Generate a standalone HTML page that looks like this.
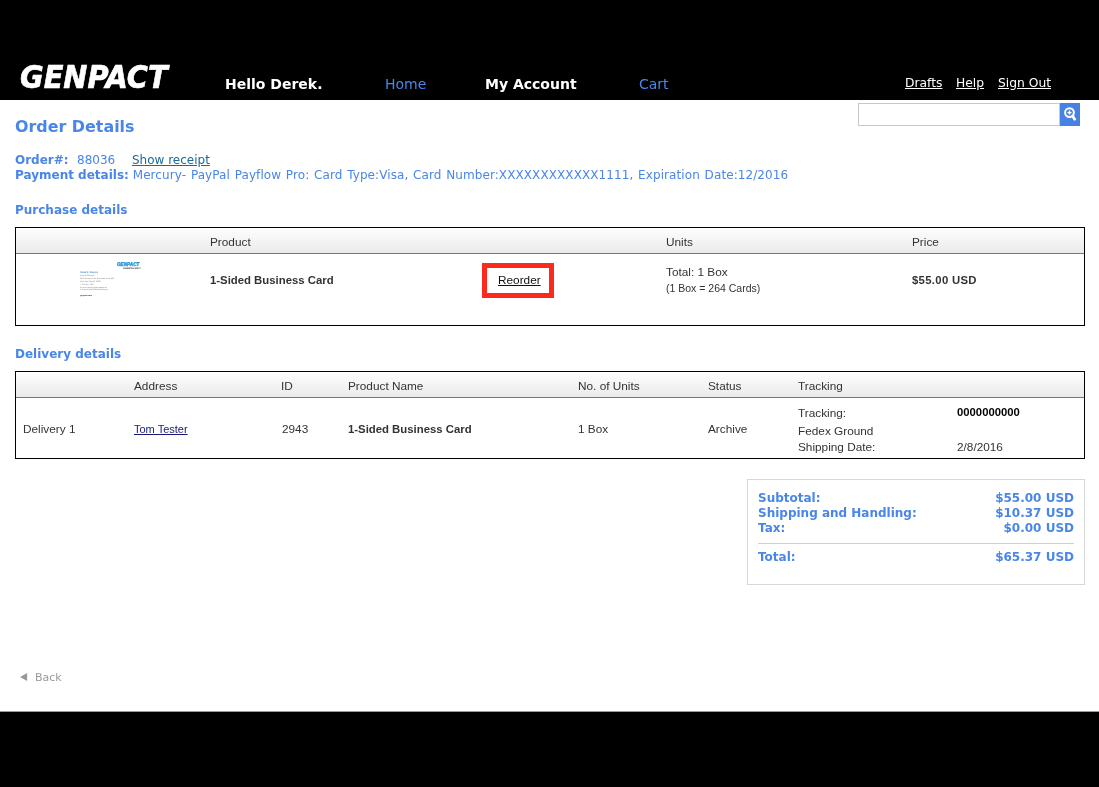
<!DOCTYPE html>
<html lang="en">
<head>
<meta charset="utf-8">
<title>Order Details</title>
<style>
html,body{margin:0;padding:0;}
body{width:1099px;height:787px;position:relative;overflow:hidden;background:#fff;font-family:"DejaVu Sans","Liberation Sans",sans-serif;font-size:12px;color:#4a86e8;}
.a{position:absolute;white-space:nowrap;line-height:1;}
#hdr{position:absolute;left:0;top:0;width:1099px;height:100px;background:#000;}
#ftr{position:absolute;left:0;top:712px;width:1099px;height:75px;background:#000;}
#ftrline{position:absolute;left:0;top:711px;width:1099px;height:1px;background:#9a9a9a;}
.logo{left:20px;top:61px;-webkit-text-stroke:0.6px #fff;font-family:"DejaVu Sans Condensed","DejaVu Sans",sans-serif;font-weight:bold;font-style:italic;font-size:32px;color:#fff;}
.nav{font-size:14px;top:77px;}
.w{color:#fff;}
.b{font-weight:bold;}
.bl{color:#4a86e8;}
.top{font-size:12.3px;color:#fff;text-decoration:underline;top:77px;}
.t{font-family:"Liberation Sans",sans-serif;font-size:11.8px;color:#333;margin-top:0.8px;}
.t.b{font-size:11.35px;}
.box{position:absolute;border:1px solid #000;box-sizing:border-box;}
.th{position:absolute;left:0;top:0;right:0;border-bottom:1px solid #777;background:linear-gradient(#fff 0,#fcfcfc 10%,#eaeaea 100%);}
</style>
</head>
<body><div style="will-change:transform;position:absolute;left:0;top:0;width:1099px;height:787px;">
<div id="hdr"></div>
<span class="a logo">GENPACT</span>
<span class="a nav w b" style="left:225px">Hello Derek.</span>
<span class="a nav bl" style="left:385px">Home</span>
<span class="a nav w b" style="left:485px">My Account</span>
<span class="a nav bl" style="left:639px">Cart</span>
<span class="a top" style="left:905px">Drafts</span>
<span class="a top" style="left:956px">Help</span>
<span class="a top" style="left:998px">Sign Out</span>

<div style="position:absolute;left:858px;top:103px;width:202px;height:23px;box-sizing:border-box;border:1px solid #c8c8c8;background:#fff;"></div>
<div style="position:absolute;left:1060px;top:103px;width:20px;height:23px;background:#4682e4;">
<svg width="20" height="23" viewBox="0 0 20 23" style="display:block"><circle cx="9.5" cy="9.6" r="4.4" fill="none" stroke="#fff" stroke-width="2"/><path d="M12.6 13 L14.7 16.2" stroke="#fff" stroke-width="2.8" stroke-linecap="round"/><path d="M7.5 9.6h4M9.5 7.6v4" stroke="#fff" stroke-width="1.4"/></svg>
</div>

<span class="a b" style="left:15px;top:118.6px;font-size:15.9px;">Order Details</span>
<span class="a" style="left:15px;top:154px;font-size:12px;"><b>Order#:</b></span>
<span class="a" style="left:77px;top:154px;font-size:12px;">88036</span>
<span class="a" style="left:132px;top:154px;font-size:12px;color:#1a6a94;text-decoration:underline;">Show receipt</span>
<span class="a" style="left:15px;top:169px;font-size:12px;"><b>Payment details:</b> <span style="letter-spacing:0.09px;word-spacing:0.8px;">Mercury- PayPal Payflow Pro: Card Type:Visa, Card Number:XXXXXXXXXXXX1111, Expiration Date:12/2016</span></span>

<span class="a b" style="left:15px;top:204px;font-size:12px;">Purchase details</span>

<div class="box" style="left:15px;top:227px;width:1070px;height:99px;">
 <div class="th" style="height:25px;"></div>
</div>
<svg style="position:absolute;left:72px;top:256px;" width="78" height="46" viewBox="72 256 78 46" font-family="Liberation Sans, sans-serif" text-rendering="geometricPrecision">
<text x="116.9" y="265.9" font-size="5.4" font-weight="bold" font-style="italic" fill="#1f93d6" stroke="#1f93d6" stroke-width="0.35" textLength="22.5" lengthAdjust="spacingAndGlyphs">GENPACT</text>
<text x="123.1" y="268.9" font-size="2.1" font-weight="bold" fill="#222" textLength="17.7" lengthAdjust="spacingAndGlyphs">GENERATING IMPACT</text>
<text x="80.2" y="273.4" font-size="2.5" font-weight="bold" fill="#3a8fd6" textLength="17.7" lengthAdjust="spacingAndGlyphs">Derek R. Shepley</text>
<text x="80.2" y="275.9" font-size="1.9" fill="#777" textLength="14.2" lengthAdjust="spacingAndGlyphs">Project Manager</text>
<text x="80.2" y="279.3" font-size="1.9" fill="#777" textLength="34" lengthAdjust="spacingAndGlyphs">1155 Avenue of the Americas, Suite 400</text>
<text x="80.2" y="281.7" font-size="1.9" fill="#777" textLength="20.9" lengthAdjust="spacingAndGlyphs">New York City, NY 10036</text>
<text x="80.2" y="285.1" font-size="1.9" fill="#777" textLength="13.4" lengthAdjust="spacingAndGlyphs">T: 123 456 7890</text>
<text x="80.2" y="287.6" font-size="1.9" fill="#777" textLength="26.6" lengthAdjust="spacingAndGlyphs">E: derek.shepley@genpact.com</text>
<text x="80.2" y="289.9" font-size="1.9" fill="#777" textLength="28" lengthAdjust="spacingAndGlyphs">L: www.linkedin.com/in/dshepley</text>
<text x="80.2" y="296.1" font-size="1.9" font-weight="bold" fill="#222" textLength="11.7" lengthAdjust="spacingAndGlyphs">genpact.com</text>
</svg>
<span class="a t" style="left:210px;top:236px;">Product</span>
<span class="a t" style="left:666px;top:236px;">Units</span>
<span class="a t" style="left:912px;top:236px;">Price</span>
<span class="a t b" style="left:210px;top:274px;">1-Sided Business Card</span>
<div style="position:absolute;left:482px;top:263px;width:72px;height:35px;box-sizing:border-box;border:5px solid #fc2a1c;"></div>
<span class="a t" style="left:498px;top:274px;color:#111;text-decoration:underline;">Reorder</span>
<span class="a t" style="left:666px;top:266px;">Total: 1 Box</span>
<span class="a t" style="left:666px;top:282.2px;font-size:10.5px;">(1 Box = 264 Cards)</span>
<span class="a t b" style="left:912px;top:274px;letter-spacing:0.3px;">$55.00 USD</span>

<span class="a b" style="left:15px;top:348px;font-size:12px;">Delivery details</span>
<div class="box" style="left:15px;top:371px;width:1070px;height:88px;">
 <div class="th" style="height:25px;"></div>
</div>
<span class="a t" style="left:134px;top:380px;">Address</span>
<span class="a t" style="left:281px;top:380px;">ID</span>
<span class="a t" style="left:348px;top:380px;">Product Name</span>
<span class="a t" style="left:578px;top:380px;">No. of Units</span>
<span class="a t" style="left:708px;top:380px;">Status</span>
<span class="a t" style="left:798px;top:380px;">Tracking</span>
<span class="a t" style="left:23px;top:423px;">Delivery 1</span>
<span class="a" style="left:134px;top:424px;font-family:'Liberation Sans',sans-serif;font-size:11px;color:#1a1a7a;text-decoration:underline;">Tom Tester</span>
<span class="a t" style="left:282px;top:423px;">2943</span>
<span class="a t b" style="left:348px;top:423px;">1-Sided Business Card</span>
<span class="a t" style="left:578px;top:423px;">1 Box</span>
<span class="a t" style="left:708px;top:423px;">Archive</span>
<span class="a t" style="left:798px;top:407px;">Tracking:</span>
<span class="a t" style="left:798px;top:425px;">Fedex Ground</span>
<span class="a t" style="left:798px;top:441px;">Shipping Date:</span>
<span class="a b" style="left:957px;top:407px;font-family:'Liberation Sans',sans-serif;font-size:11.3px;color:#000;">0000000000</span>
<span class="a t" style="left:957px;top:441px;">2/8/2016</span>

<div style="position:absolute;left:747px;top:479px;width:338px;height:106px;box-sizing:border-box;border:1px solid #d8d8d8;"></div>
<span class="a b" style="left:758px;top:492px;font-size:12px;">Subtotal:</span>
<span class="a b" style="left:758px;top:507px;font-size:12px;">Shipping and Handling:</span>
<span class="a b" style="left:758px;top:522px;font-size:12px;">Tax:</span>
<span class="a b" style="left:758px;top:551px;font-size:12px;">Total:</span>
<span class="a b" style="right:25px;top:492px;font-size:12px;">$55.00 USD</span>
<span class="a b" style="right:25px;top:507px;font-size:12px;">$10.37 USD</span>
<span class="a b" style="right:25px;top:522px;font-size:12px;">$0.00 USD</span>
<span class="a b" style="right:25px;top:551px;font-size:12px;">$65.37 USD</span>
<div style="position:absolute;left:758px;top:543px;width:316px;height:1px;background:#d0d0d0;"></div>

<svg style="position:absolute;left:19px;top:672px;" width="10" height="10" viewBox="0 0 10 10"><polygon points="8.1,1 8.1,9 1,5" fill="#999"/></svg>
<span class="a" style="left:35px;top:672px;font-size:11px;color:#999;">Back</span>

<div id="ftrline"></div>
<div id="ftr"></div>
</div></body>
</html>
